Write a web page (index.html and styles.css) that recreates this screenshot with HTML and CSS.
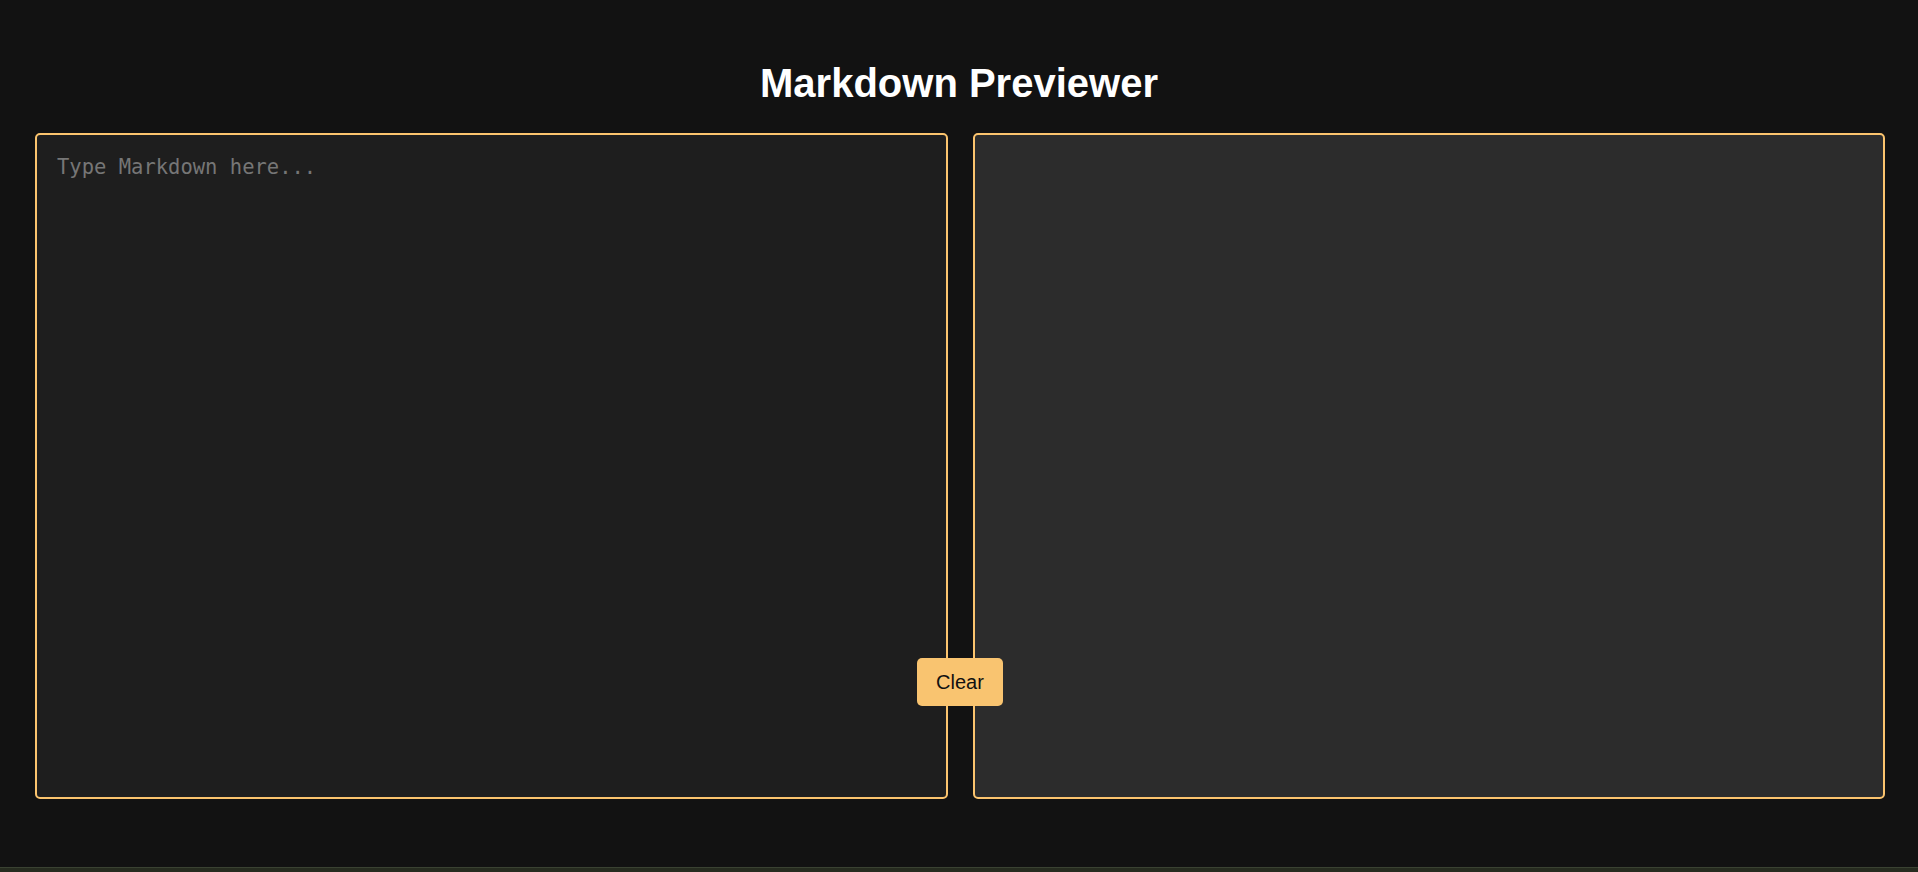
FILE: index.html
```html
<!DOCTYPE html>
<html lang="en">
<head>
<meta charset="utf-8">
<title>Markdown Previewer</title>
<link rel="stylesheet" href="styles.css">
</head>
<body>
<div class="page">
  <h1 class="title">Markdown Previewer</h1>
  <main class="workspace">
    <textarea class="editor" placeholder="Type Markdown here..." autofocus></textarea>
    <section class="preview"></section>
    <button class="clear-btn" type="button">Clear</button>
  </main>
  <div class="bottom-strip"></div>
</div>
</body>
</html>
```
FILE: styles.css
```css
html, body {
  margin: 0;
  padding: 0;
  background: #121212;
}

.page {
  min-height: 100vh;
  display: flex;
  flex-direction: column;
  font-family: "Liberation Sans", Arial, sans-serif;
  color: #ffffff;
}

.title {
  margin: 60px 0 27px;
  text-align: center;
  font-size: 40px;
  font-weight: bold;
  line-height: 46px;
  color: #ffffff;
}

.workspace {
  position: relative;
  display: flex;
  gap: 25px;
  padding: 0 33px 0 35px;
}

.editor,
.preview {
  flex: 1 1 0;
  min-width: 0;
  height: 666px;
  box-sizing: border-box;
  border: 2px solid #fbc46e;
  border-radius: 5px;
  margin: 0;
}

.editor {
  background: #1e1e1e;
  color: #dddddd;
  caret-color: #ffffff;
  font-family: "DejaVu Sans Mono", monospace;
  font-size: 20.5px;
  padding: 20px 20px;
  resize: none;
  outline: none;
}

.editor::placeholder {
  color: #767676;
  opacity: 1;
}

.preview {
  background: #2c2c2c;
  padding: 20px;
}

.clear-btn {
  position: absolute;
  left: 917px;
  top: 525px;
  width: 86px;
  height: 48px;
  border: none;
  border-radius: 5px;
  background: #f9c470;
  color: #111111;
  font-family: "Liberation Sans", Arial, sans-serif;
  font-size: 20px;
  padding: 0;
  cursor: pointer;
}

.bottom-strip {
  margin-top: auto;
  height: 4px;
  background: #262b1f;
  border-top: 1px solid #3a4232;
}
```
